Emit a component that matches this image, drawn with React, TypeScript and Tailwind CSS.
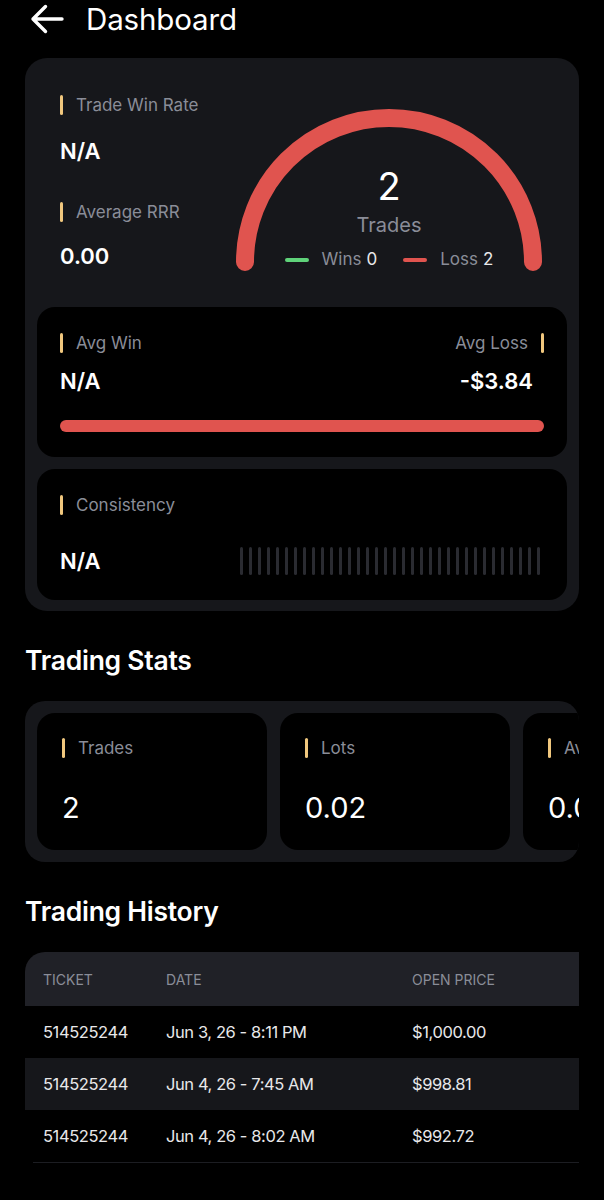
import React from "react";

const font = { fontFamily: "Inter, 'Noto Sans', sans-serif" };

function Label({ text, right = false }: { text: string; right?: boolean }) {
  return (
    <div className="flex items-center gap-[13px] h-[24px]">
      {!right && <span className="w-[3px] h-[20px] rounded-full bg-[#f0c77e]" />}
      <span className="text-[17px] leading-[24px] text-[#8a8d98]">{text}</span>
      {right && <span className="w-[3px] h-[20px] rounded-full bg-[#f0c77e]" />}
    </div>
  );
}

function StatCard({ label, value }: { label: string; value: string }) {
  return (
    <div className="w-[230px] h-[137px] shrink-0 rounded-[18px] bg-black pl-[25px] pt-[23px]">
      <Label text={label} />
      <div className="mt-[30px] text-[29px] leading-[36px] text-white">{value}</div>
    </div>
  );
}

export default function App() {
  const ticks = Array.from({ length: 34 });
  const rows = [
    { t: "514525244", d: "Jun 3, 26 - 8:11 PM", p: "$1,000.00", alt: false },
    { t: "514525244", d: "Jun 4, 26 - 7:45 AM", p: "$998.81", alt: true },
    { t: "514525244", d: "Jun 4, 26 - 8:02 AM", p: "$992.72", alt: false },
  ];
  return (
    <div className="w-[604px] min-h-[1200px] bg-black text-white" style={font}>
      {/* Header */}
      <div className="h-[38px] flex items-center">
        <svg className="ml-[30px]" width="34" height="30" viewBox="0 0 34 30" fill="none">
          <path d="M3 15H32M15.5 2.5L3 15L15.5 27.5" stroke="white" strokeWidth="3.4" strokeLinecap="round" strokeLinejoin="round" />
        </svg>
        <span className="ml-[22px] text-[29.5px] leading-[36px] text-white tracking-[-0.005em]">Dashboard</span>
      </div>

      {/* Main card */}
      <div className="mt-[20px] mx-[25px] w-[554px] rounded-[22px] bg-[#16171b]">
        <div className="flex h-[249px]">
          <div className="pl-[35px] pt-[35px]">
            <Label text="Trade Win Rate" />
            <div className="mt-[19px] text-[22px] leading-[30px] font-semibold">N/A</div>
            <div className="mt-[34px]">
              <Label text="Average RRR" />
            </div>
            <div className="mt-[17px] text-[22px] leading-[30px] font-semibold">0.00</div>
          </div>
          <div className="ml-auto mr-[28px] mt-[42px] relative w-[324px] h-[175px]">
            <svg width="324" height="175" viewBox="0 0 324 175" fill="none">
              <path d="M18 162 A144 144 0 0 1 306 162" stroke="#e0544f" strokeWidth="18" strokeLinecap="round" />
            </svg>
            <div className="absolute inset-x-0 top-[64px] flex flex-col items-center">
              <div className="text-[38px] leading-[44px] text-white">2</div>
              <div className="mt-[5px] text-[20px] leading-[24px] text-[#8a8d98]">Trades</div>
              <div className="mt-[12px] flex items-center h-[22px] text-[17px]">
                <span className="w-[24px] h-[4px] rounded-full bg-[#5fd37a]" />
                <span className="ml-[13px] text-[#8a8d98]">Wins</span>
                <span className="ml-[5px] text-[#e8e8ea]">0</span>
                <span className="ml-[26px] w-[24px] h-[4px] rounded-full bg-[#e0544f]" />
                <span className="ml-[13px] text-[#8a8d98]">Loss</span>
                <span className="ml-[5px] text-[#e8e8ea]">2</span>
              </div>
            </div>
          </div>
        </div>

        <div className="px-[12px] pb-[11px] flex flex-col gap-[12px]">
          <div className="h-[150px] rounded-[18px] bg-black px-[23px] pt-[24px]">
            <div className="flex justify-between">
              <Label text="Avg Win" />
              <Label text="Avg Loss" right />
            </div>
            <div className="mt-[11px] flex justify-between text-[22px] leading-[30px] font-semibold">
              <span>N/A</span>
              <span className="mr-[11px]">-$3.84</span>
            </div>
            <div className="mt-[24px] h-[12px] rounded-full bg-[#e0544f]" />
          </div>

          <div className="h-[131px] rounded-[18px] bg-black px-[23px] pt-[24px]">
            <Label text="Consistency" />
            <div className="mt-[29px] h-[30px] flex items-center justify-between">
              <span className="text-[22px] leading-[30px] font-semibold">N/A</span>
              <div className="mr-[4px] flex gap-[6px]">
                {ticks.map((_, i) => (
                  <span key={i} className="w-[3px] h-[28px] rounded-full bg-[#2a2b31]" />
                ))}
              </div>
            </div>
          </div>
        </div>
      </div>

      {/* Trading Stats */}
      <div className="mt-[33px] px-[25px] text-[26.5px] leading-[32px] font-semibold tracking-[-0.01em]">Trading Stats</div>
      <div className="mt-[25px] mx-[25px] w-[554px] h-[161px] overflow-hidden rounded-[20px] bg-[#16171b] p-[12px] flex gap-[13px]">
        <StatCard label="Trades" value="2" />
        <StatCard label="Lots" value="0.02" />
        <StatCard label="Avg Lot" value="0.01" />
      </div>

      {/* Trading History */}
      <div className="mt-[33px] px-[25px] text-[26.5px] leading-[32px] font-semibold tracking-[-0.01em]">Trading History</div>
      <div className="mt-[25px] mx-[25px] w-[554px] overflow-hidden rounded-tl-[20px]">
        <div className="h-[54px] bg-[#202127] flex items-center pl-[18px] text-[14px] uppercase text-[#8a8d98]">
          <span className="w-[123px]">Ticket</span>
          <span className="w-[246px]">Date</span>
          <span>Open Price</span>
        </div>
        {rows.map((r, i) => (
          <div
            key={i}
            className={`h-[52px] flex items-center pl-[18px] text-[16.5px] text-[#e8e8ea] tracking-[-0.025em] ${r.alt ? "bg-[#16171b]" : "bg-black"}`}
          >
            <span className="w-[123px]">{r.t}</span>
            <span className="w-[246px]">{r.d}</span>
            <span>{r.p}</span>
          </div>
        ))}
        <div className="ml-[8px] h-px bg-[#1c1d22]" />
      </div>
    </div>
  );
}
